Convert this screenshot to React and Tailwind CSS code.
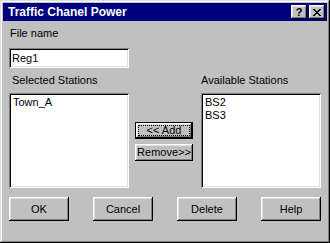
const raised =
  "shadow-[inset_-1px_-1px_#000,inset_1px_1px_#fff,inset_-2px_-2px_#808080,inset_2px_2px_#dfdfdf]";
const sunken =
  "shadow-[inset_1px_1px_#808080,inset_-1px_-1px_#fff,inset_2px_2px_#000,inset_-2px_-2px_#dfdfdf]";

function Btn({ children, className = "" }) {
  return (
    <div
      className={`flex items-center justify-center bg-[#c0c0c0] text-[11px] text-black ${raised} ${className}`}
    >
      {children}
    </div>
  );
}

export default function App() {
  return (
    <div
      className="w-[330px] h-[243px] bg-[#c0c0c0] p-[3px] flex flex-col shadow-[inset_-1px_-1px_#000,inset_1px_1px_#dfdfdf,inset_-2px_-2px_#808080,inset_2px_2px_#fff]"
      style={{ fontFamily: '"Liberation Sans", Arial, sans-serif' }}
    >
      {/* Title bar */}
      <div className="h-[18px] bg-[#000080] flex items-center pl-[5px] pr-[2px]">
        <span className="text-white font-bold text-[12px] leading-none flex-1">
          Traffic Chanel Power
        </span>
        <div className="flex gap-[2px]">
          <Btn className="w-[16px] h-[14px] font-bold text-[11px] leading-none">?</Btn>
          <Btn className="w-[16px] h-[14px]">
            <svg width="8" height="7" viewBox="0 0 8 7">
              <path
                d="M0 0h2v1h1v1h2V1h1V0h2v1H7v1H6v1H5v1h1v1h1v1h1v1H6V6H5V5H3v1H2v1H0V6h1V5h1V4h1V3H2V2H1V1H0z"
                fill="#000"
              />
            </svg>
          </Btn>
        </div>
      </div>

      {/* Body */}
      <div className="flex flex-col px-[6px]">
        <div className="mt-[6px] pl-[1px] text-[11px] leading-[13px]">File name</div>
        <div
          className={`mt-[8px] w-[120px] h-[20px] bg-white flex items-center px-[3px] text-[11px] ${sunken}`}
        >
          Reg1
        </div>

        <div className="flex items-start mt-[6px]">
          <div className="flex flex-col w-[120px]">
            <div className="pl-[3px] text-[11px] leading-[13px]">Selected Stations</div>
            <div className={`mt-[6px] h-[95px] bg-white px-[4px] py-[3px] text-[11px] leading-[13px] ${sunken}`}>
              Town_A
            </div>
          </div>

          <div className="flex flex-col ml-[6px] w-[58px] mt-[48px] gap-[5px]">
            <div className="h-[17px] border border-black bg-[#c0c0c0]">
              <div className={`h-full flex items-center justify-center p-[2px] ${raised}`}>
                <div className="w-full h-full border border-dotted border-black flex items-center justify-center text-[11px] leading-none">
                  &lt;&lt; Add
                </div>
              </div>
            </div>
            <Btn className="h-[17px]">Remove&gt;&gt;</Btn>
          </div>

          <div className="flex flex-col ml-[8px] w-[120px]">
            <div className="text-[11px] leading-[13px]">Available Stations</div>
            <div className={`mt-[6px] h-[95px] bg-white px-[4px] py-[3px] text-[11px] leading-[13px] ${sunken}`}>
              <div>BS2</div>
              <div>BS3</div>
            </div>
          </div>
        </div>

        <div className="flex justify-between mt-[9px]">
          <Btn className="w-[60px] h-[24px]">OK</Btn>
          <Btn className="w-[60px] h-[24px]">Cancel</Btn>
          <Btn className="w-[60px] h-[24px]">Delete</Btn>
          <Btn className="w-[60px] h-[24px]">Help</Btn>
        </div>
      </div>
    </div>
  );
}
